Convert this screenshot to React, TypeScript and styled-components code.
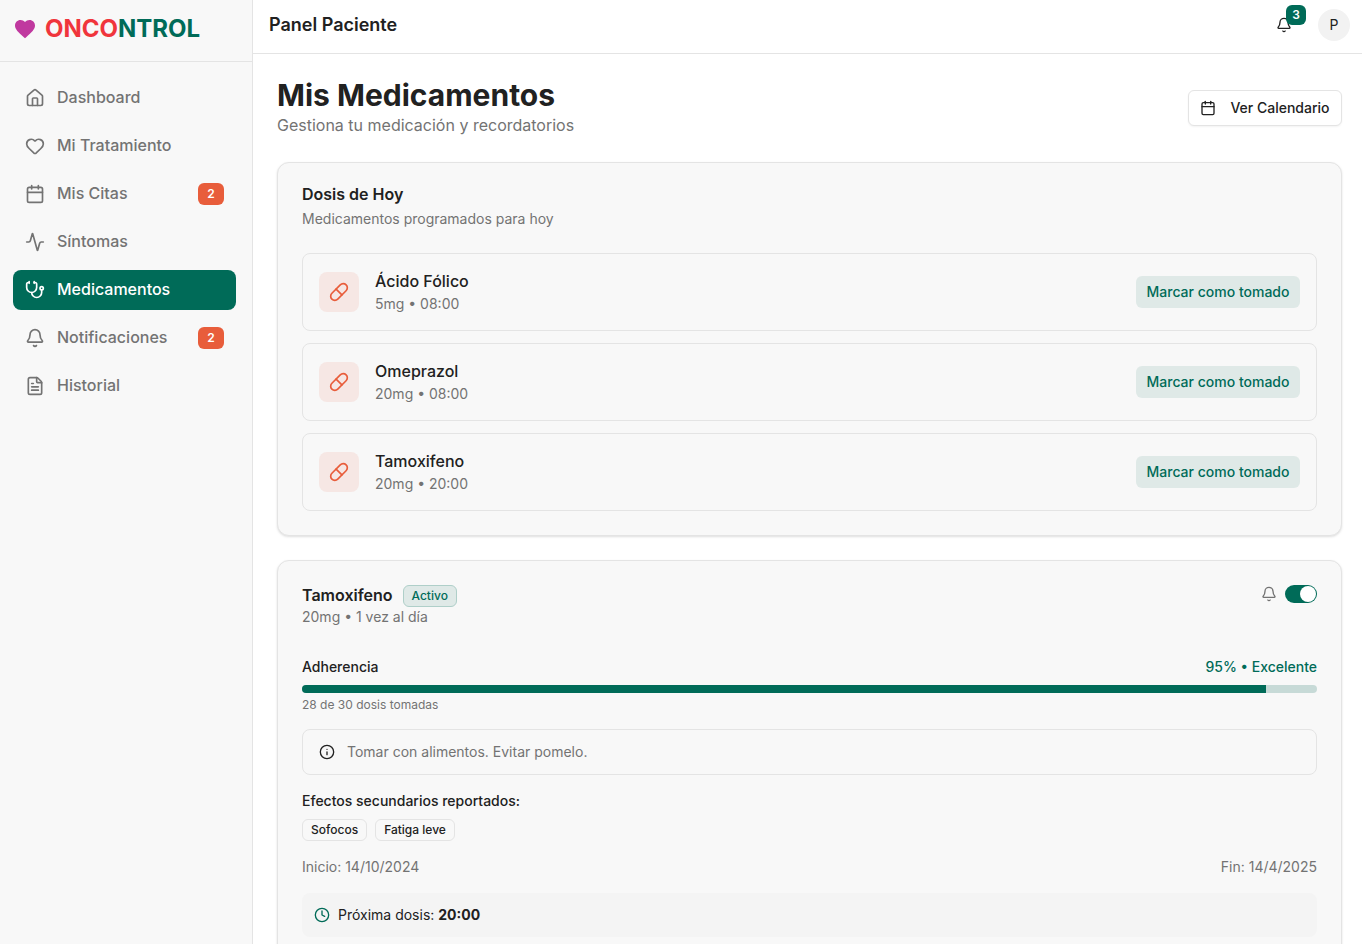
import React, { useState } from "react";
import styled, { createGlobalStyle, css } from "styled-components";
import {
  Activity,
  Bell,
  Calendar,
  Clock,
  FileText,
  Heart,
  House,
  Info,
  Pill,
  Stethoscope,
  type LucideIcon,
} from "lucide-react";
import { MdFavorite } from "react-icons/md";

const color = {
  page: "#ffffff",
  surface: "#f8f8f8",
  soft: "#f4f4f4",
  border: "#e4e4e4",
  text: "#212121",
  muted: "#737373",
  green: "#006b58",
  greenTint: "#dfe9e7",
  greenLine: "#afcfc9",
  greenTrack: "#c7dad7",
  orange: "#e85d3b",
  orangeTint: "#f6e7e4",
  red: "#f0353c",
  magenta: "#c0399f",
};

const GlobalStyle = createGlobalStyle`
  *, *::before, *::after { box-sizing: border-box; }
  body {
    margin: 0;
    background: ${color.page};
    color: ${color.text};
    font-family: Inter, "Liberation Sans", sans-serif;
    font-size: 16px;
    line-height: 24px;
  }
  h1, h2, p, ul, dl, dd { margin: 0; padding: 0; }
  ul { list-style: none; }
  button { font: inherit; color: inherit; cursor: pointer; }
  svg { flex-shrink: 0; }
`;

const Layout = styled.div`
  display: flex;
  align-items: flex-start;
  min-height: 100vh;
`;

const Sidebar = styled.aside`
  position: sticky;
  top: 0;
  flex: 0 0 253px;
  height: 100vh;
  background: ${color.surface};
  border-right: 1px solid ${color.border};
`;

const Brand = styled.a`
  display: flex;
  align-items: center;
  gap: 8px;
  height: 62px;
  padding: 0 13px 3px;
  border-bottom: 1px solid ${color.border};
  color: ${color.green};
  font-size: 24px;
  line-height: 32px;
  font-weight: 700;
  text-decoration: none;
`;

const BrandAccent = styled.span`
  color: ${color.red};
`;

const NavList = styled.ul`
  display: flex;
  flex-direction: column;
  gap: 8px;
  padding: 16px 16px 16px 13px;
`;

const NavLink = styled.a<{ $active?: boolean }>`
  display: flex;
  align-items: center;
  gap: 12px;
  height: 40px;
  padding: 0 12px;
  border-radius: 8px;
  color: ${color.muted};
  font-weight: 500;
  text-decoration: none;
  ${(p) =>
    p.$active &&
    css`
      background: ${color.green};
      color: #ffffff;
    `}
`;

const NavLabel = styled.span`
  flex: 1;
  padding-bottom: 2px;
`;

const CountBadge = styled.span`
  display: flex;
  align-items: center;
  justify-content: center;
  width: 26px;
  height: 22px;
  border-radius: 6px;
  background: ${color.orange};
  color: #ffffff;
  font-size: 12px;
  line-height: 16px;
  font-weight: 600;
`;

const Content = styled.div`
  flex: 1;
  min-width: 0;
`;

const TopBar = styled.header`
  display: flex;
  align-items: center;
  justify-content: space-between;
  padding: 9px 12px 12px 16px;
  border-bottom: 1px solid ${color.border};
`;

const TopTitle = styled.p`
  font-size: 18px;
  line-height: 28px;
  font-weight: 600;
`;

const TopActions = styled.div`
  display: flex;
  align-items: center;
  gap: 16px;
`;

const BellButton = styled.button`
  position: relative;
  display: flex;
  align-items: center;
  justify-content: center;
  width: 36px;
  height: 32px;
  padding: 0;
  border: 0;
  background: none;
`;

const BellCount = styled.span`
  position: absolute;
  top: -4px;
  right: -4px;
  width: 20px;
  height: 20px;
  border-radius: 6px;
  background: ${color.green};
  color: #ffffff;
  font-size: 12px;
  line-height: 20px;
  font-weight: 600;
  text-align: center;
`;

const Avatar = styled.button`
  width: 32px;
  height: 32px;
  padding: 0;
  border: 0;
  border-radius: 50%;
  background: #f2f2f2;
  font-size: 14px;
  line-height: 20px;
`;

const Main = styled.main`
  display: flex;
  flex-direction: column;
  gap: 24px;
  padding: 24px 20px 24px 24px;
`;

const PageHead = styled.div`
  display: flex;
  align-items: center;
  justify-content: space-between;
`;

const PageTitle = styled.h1`
  font-size: 30px;
  line-height: 34px;
  font-weight: 700;
`;

const PageSubtitle = styled.p`
  color: ${color.muted};
  line-height: 26px;
`;

const OutlineButton = styled.button`
  display: flex;
  align-items: center;
  justify-content: center;
  gap: 14px;
  width: 154px;
  height: 36px;
  padding: 0;
  border: 1px solid ${color.border};
  border-radius: 6px;
  background: ${color.page};
  box-shadow: 0 1px 2px rgba(0, 0, 0, 0.05);
  font-size: 14px;
  line-height: 20px;
  font-weight: 500;
  white-space: nowrap;
`;

const Card = styled.section`
  display: flex;
  flex-direction: column;
  padding: 24px;
  border: 1px solid ${color.border};
  border-radius: 12px;
  background: ${color.surface};
  box-shadow: 0 1px 3px rgba(0, 0, 0, 0.08), 0 1px 2px rgba(0, 0, 0, 0.06);
`;

const CardHead = styled.div`
  display: flex;
  flex-direction: column;
  gap: 6px;
  margin-bottom: 24px;
`;

const CardTitle = styled.h2`
  padding-bottom: 2px;
  font-size: 16px;
  line-height: 14px;
  font-weight: 600;
`;

const SmallMuted = styled.p`
  color: ${color.muted};
  font-size: 14px;
  line-height: 20px;
`;

const DoseList = styled.ul`
  display: flex;
  flex-direction: column;
  gap: 12px;
`;

const DoseRow = styled.li`
  display: flex;
  align-items: center;
  gap: 16px;
  padding: 16px;
  border: 1px solid ${color.border};
  border-radius: 8px;
`;

const PillTile = styled.span`
  display: flex;
  align-items: center;
  justify-content: center;
  width: 40px;
  height: 40px;
  border-radius: 8px;
  background: ${color.orangeTint};
  color: ${color.orange};
`;

const DoseText = styled.div`
  flex: 1;
`;

const DoseName = styled.p`
  padding-bottom: 2px;
  line-height: 22px;
  font-weight: 500;
`;

const TakeButton = styled.button`
  width: 164px;
  height: 32px;
  padding: 0;
  border: 0;
  border-radius: 6px;
  background: ${color.greenTint};
  color: ${color.green};
  font-size: 14px;
  line-height: 20px;
  font-weight: 500;
  white-space: nowrap;
`;

const MedHead = styled.div`
  display: flex;
  align-items: flex-start;
  justify-content: space-between;
  margin-bottom: 30px;
`;

const MedTitleRow = styled.div`
  display: flex;
  align-items: center;
  gap: 10px;
`;

const Tag = styled.span<{ $tone?: "green" }>`
  display: inline-flex;
  align-items: center;
  height: 22px;
  padding: 0 8px;
  border: 1px solid ${(p) => (p.$tone ? color.greenLine : color.border)};
  border-radius: 6px;
  background: ${(p) => (p.$tone ? color.greenTint : "transparent")};
  color: ${(p) => (p.$tone ? color.green : color.text)};
  font-size: 12px;
  line-height: 16px;
  font-weight: 500;
`;

const Reminder = styled.label`
  display: flex;
  align-items: center;
  gap: 8px;
  color: ${color.muted};
`;

const Toggle = styled.input`
  appearance: none;
  display: flex;
  align-items: center;
  width: 32px;
  height: 18px;
  margin: 0;
  padding: 1px;
  border-radius: 9px;
  background: #cfcfcf;
  cursor: pointer;
  &::before {
    content: "";
    width: 16px;
    height: 16px;
    border-radius: 50%;
    background: #ffffff;
  }
  &:checked {
    justify-content: flex-end;
    background: ${color.green};
  }
`;

const Stack = styled.div`
  display: flex;
  flex-direction: column;
  gap: 16px;
`;

const SplitRow = styled.div<{ $muted?: boolean }>`
  display: flex;
  justify-content: space-between;
  color: ${(p) => (p.$muted ? color.muted : color.text)};
  font-size: 14px;
  line-height: 20px;
  font-weight: ${(p) => (p.$muted ? 400 : 500)};
`;

const GreenText = styled.span`
  color: ${color.green};
`;

const Track = styled.div`
  height: 8px;
  margin: 8px 0 4px;
  border-radius: 4px;
  overflow: hidden;
  background: ${color.greenTrack};
`;

const Fill = styled.div`
  height: 100%;
  background: ${color.green};
`;

const Caption = styled.p`
  color: ${color.muted};
  font-size: 12px;
  line-height: 16px;
`;

const Note = styled.div`
  display: flex;
  align-items: center;
  gap: 12px;
  padding: 12px 16px;
  border: 1px solid ${color.border};
  border-radius: 8px;
`;

const SmallLabel = styled.p`
  margin-bottom: 8px;
  font-size: 14px;
  line-height: 20px;
  font-weight: 500;
`;

const TagList = styled.ul`
  display: flex;
  gap: 8px;
  line-height: 22px;
  li { display: flex; }
`;

const NextDose = styled.div`
  display: flex;
  align-items: center;
  gap: 8px;
  padding: 12px;
  border-radius: 8px;
  background: ${color.soft};
  font-size: 14px;
  line-height: 20px;
  strong { font-weight: 700; }
  svg { color: ${color.green}; }
`;

type NavItem = { label: string; icon: LucideIcon; count?: number; active?: boolean };

const navItems: NavItem[] = [
  { label: "Dashboard", icon: House },
  { label: "Mi Tratamiento", icon: Heart },
  { label: "Mis Citas", icon: Calendar, count: 2 },
  { label: "Síntomas", icon: Activity },
  { label: "Medicamentos", icon: Stethoscope, active: true },
  { label: "Notificaciones", icon: Bell, count: 2 },
  { label: "Historial", icon: FileText },
];

const doses = [
  { name: "Ácido Fólico", detail: "5mg • 08:00" },
  { name: "Omeprazol", detail: "20mg • 08:00" },
  { name: "Tamoxifeno", detail: "20mg • 20:00" },
];

const sideEffects = ["Sofocos", "Fatiga leve"];

export default function App() {
  const [reminder, setReminder] = useState(true);
  const adherence = 95;

  return (
    <>
      <GlobalStyle />
      <Layout>
        <Sidebar>
          <Brand href="#">
            <MdFavorite size={24} color={color.magenta} />
            <span>
              <BrandAccent>ONCO</BrandAccent>NTROL
            </span>
          </Brand>
          <nav>
            <NavList>
              {navItems.map(({ label, icon: Icon, count, active }) => (
                <li key={label}>
                  <NavLink href="#" $active={active} aria-current={active ? "page" : undefined}>
                    <Icon size={20} />
                    <NavLabel>{label}</NavLabel>
                    {count && <CountBadge>{count}</CountBadge>}
                  </NavLink>
                </li>
              ))}
            </NavList>
          </nav>
        </Sidebar>

        <Content>
          <TopBar>
            <TopTitle>Panel Paciente</TopTitle>
            <TopActions>
              <BellButton aria-label="Notificaciones">
                <Bell size={16} />
                <BellCount>3</BellCount>
              </BellButton>
              <Avatar>P</Avatar>
            </TopActions>
          </TopBar>

          <Main>
            <PageHead>
              <div>
                <PageTitle>Mis Medicamentos</PageTitle>
                <PageSubtitle>Gestiona tu medicación y recordatorios</PageSubtitle>
              </div>
              <OutlineButton>
                <Calendar size={16} />
                Ver Calendario
              </OutlineButton>
            </PageHead>

            <Card>
              <CardHead>
                <CardTitle>Dosis de Hoy</CardTitle>
                <SmallMuted>Medicamentos programados para hoy</SmallMuted>
              </CardHead>
              <DoseList>
                {doses.map((dose) => (
                  <DoseRow key={dose.name}>
                    <PillTile>
                      <Pill size={20} />
                    </PillTile>
                    <DoseText>
                      <DoseName>{dose.name}</DoseName>
                      <SmallMuted>{dose.detail}</SmallMuted>
                    </DoseText>
                    <TakeButton>Marcar como tomado</TakeButton>
                  </DoseRow>
                ))}
              </DoseList>
            </Card>

            <Card>
              <MedHead>
                <div>
                  <MedTitleRow>
                    <CardTitle>Tamoxifeno</CardTitle>
                    <Tag $tone="green">Activo</Tag>
                  </MedTitleRow>
                  <SmallMuted>20mg • 1 vez al día</SmallMuted>
                </div>
                <Reminder>
                  <Bell size={16} />
                  <Toggle
                    type="checkbox"
                    role="switch"
                    aria-label="Recordatorio"
                    checked={reminder}
                    onChange={(e) => setReminder(e.target.checked)}
                  />
                </Reminder>
              </MedHead>

              <Stack>
                <div>
                  <SplitRow>
                    <span>Adherencia</span>
                    <GreenText>{adherence}% • Excelente</GreenText>
                  </SplitRow>
                  <Track>
                    <Fill style={{ width: `${adherence}%` }} />
                  </Track>
                  <Caption>28 de 30 dosis tomadas</Caption>
                </div>
                <Note>
                  <Info size={16} />
                  <SmallMuted>Tomar con alimentos. Evitar pomelo.</SmallMuted>
                </Note>
                <div>
                  <SmallLabel>Efectos secundarios reportados:</SmallLabel>
                  <TagList>
                    {sideEffects.map((effect) => (
                      <li key={effect}>
                        <Tag>{effect}</Tag>
                      </li>
                    ))}
                  </TagList>
                </div>
                <SplitRow $muted>
                  <span>Inicio: 14/10/2024</span>
                  <span>Fin: 14/4/2025</span>
                </SplitRow>
                <NextDose>
                  <Clock size={16} />
                  <span>
                    Próxima dosis: <strong>20:00</strong>
                  </span>
                </NextDose>
              </Stack>
            </Card>
          </Main>
        </Content>
      </Layout>
    </>
  );
}
